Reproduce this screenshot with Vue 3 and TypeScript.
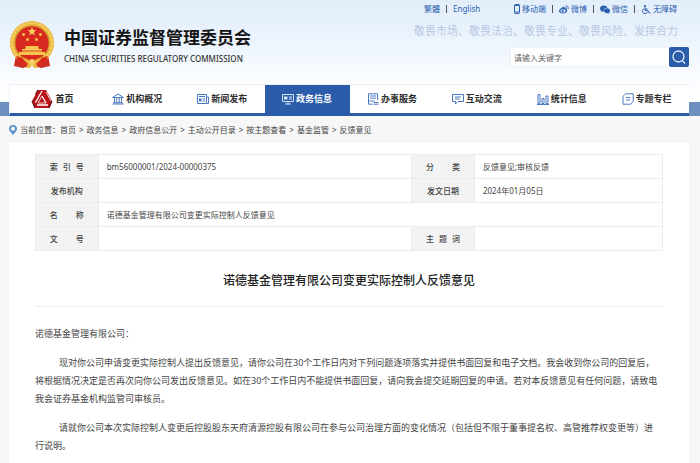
<script setup lang="ts">
import { ref } from 'vue'

interface NavItem { label: string; icon: string; active?: boolean }

const keyword = ref('')

const tools = [
  { label: '移动端', icon: 'phone' },
  { label: '微博', icon: 'weibo' },
  { label: '微信', icon: 'wechat' },
  { label: '无障碍', icon: 'access' },
]

const nav: NavItem[] = [
  { label: '首页', icon: 'home' },
  { label: '机构概况', icon: 'bank' },
  { label: '新闻发布', icon: 'news' },
  { label: '政务信息', icon: 'screen', active: true },
  { label: '办事服务', icon: 'service' },
  { label: '互动交流', icon: 'chat' },
  { label: '统计信息', icon: 'chart' },
  { label: '专题专栏', icon: 'topic' },
]

const crumbs = ['首页', '政务信息', '政府信息公开', '主动公开目录', '按主题查看', '基金监管', '反馈意见']

const title = '诺德基金管理有限公司变更实际控制人反馈意见'

const paragraphs: string[][] = [
  [
    '现对你公司申请变更实际控制人提出反馈意见，请你公司在30个工作日内对下列问题逐项落实并提供书面回复和电子文档。我会收到你公司的回复后，',
    '将根据情况决定是否再次向你公司发出反馈意见。如在30个工作日内不能提供书面回复，请向我会提交延期回复的申请。若对本反馈意见有任何问题，请致电',
    '我会证券基金机构监管司审核员。',
  ],
  [
    '请就你公司本次实际控制人变更后控股股东天府清源控股有限公司在参与公司治理方面的变化情况（包括但不限于董事提名权、高管推荐权变更等）进',
    '行说明。',
  ],
]
</script>

<template>
  <div class="page">
    <header class="header">
      <a class="brand" href="#">
        <svg class="emblem" viewBox="0 0 46 48" aria-hidden="true">
          <path d="M7 34 5 45l9 2 9-3 9 3 9-2-2-11z" fill="#cf2b22" />
          <circle cx="23" cy="22" r="22" fill="#e9b53c" />
          <circle cx="23" cy="22" r="20" fill="none" stroke="#f5d269" stroke-width="2" stroke-dasharray="3 1" />
          <circle cx="23" cy="22" r="17" fill="#d9281f" stroke="#c98a22" stroke-width="1" />
          <path d="m23 6 1.1 3.1h3.3l-2.6 2 1 3.200-2.800-1.900-2.800 1.900 1-3.200-2.600-2h3.300z" fill="#f8d45c" />
          <g fill="#f4c64e">
            <circle cx="14.500" cy="13.500" r="1.400" /><circle cx="31.500" cy="13.500" r="1.400" />
            <circle cx="18.500" cy="18.500" r="1.400" /><circle cx="27.500" cy="18.500" r="1.400" />
            <path d="M17 25h12l1 3h3v3h3v3H10v-3h3v-3h3z" />
          </g>
          <path d="M12 30h22" stroke="#d9281f" stroke-width="0.800" />
          <path d="M7 35q16 6 32 0l-3 6q-13 5-26 0z" fill="#d8281e" />
          <path d="M13 37q5 0 8 3l2-1 2 1q3-3 8-3l-6 6 2 4h-4l-2-3-2 3h-4l2-4z" fill="#eab93e" />
          <circle cx="23" cy="41" r="3" fill="#f5d269" />
        </svg>
        <span class="names">
          <span class="name-cn">中国证券监督管理委员会</span>
          <span class="name-en">CHINA SECURITIES REGULATORY COMMISSION</span>
        </span>
      </a>
      <div class="side">
        <div class="topline">
          <div class="links">
            <a href="#">繁體</a><i class="bar"></i><a href="#">English</a>
          </div>
          <div class="links">
            <template v-for="(t, i) in tools" :key="t.label">
              <i v-if="i" class="bar"></i>
              <a href="#" class="tool">
                <svg v-if="t.icon === 'phone'" class="phone" viewBox="0 0 6 10" aria-hidden="true">
                  <rect x="0.500" y="0.500" width="5" height="9" rx="0.800" fill="none" stroke="#2b5fae" />
                  <path d="M1 1.500h4M1 8h4" stroke="#2b5fae" />
                </svg>
                <svg v-else-if="t.icon === 'weibo'" viewBox="0 0 20 18" aria-hidden="true">
                  <path d="M8 4c2-1 4 0 3.500 2.500C14 6 16 7 15 9.200 18 10.500 16.500 17 8.500 17 3 17 0 14.500 0 12c0-3 4.500-7 8-8z" fill="#2b5fae" />
                  <ellipse cx="8" cy="12" rx="5.300" ry="3.500" fill="#e9f2fc" />
                  <circle cx="7.500" cy="12.300" r="2.200" fill="#2b5fae" />
                  <path d="M13 1.500c4-.8 6.500 2.500 5.300 6.500M13.300 4.500c2-.2 3 1 2.500 3" fill="none" stroke="#2b5fae" stroke-width="1.600" />
                </svg>
                <svg v-else-if="t.icon === 'wechat'" viewBox="0 0 20 18" aria-hidden="true">
                  <path d="M7.500 1C3.500 1 0 3.500 0 7c0 2 1 3.500 2.500 4.500L2 14l3-1.500c1 .3 2 .4 3 .3C6.500 8 11 5 15 5.300 14 2.500 11 1 7.500 1z" fill="#2b5fae" />
                  <path d="M14 6.500c-3.500 0-6 2.200-6 5s2.500 5 6 5l2-.3 2.500 1.300-.5-2c1.300-1 2-2.300 2-4 0-2.800-2.500-5-6-5z" fill="#2b5fae" />
                </svg>
                <svg v-else viewBox="0 0 18 18" aria-hidden="true">
                  <circle cx="7" cy="2.300" r="2.200" fill="#2b5fae" />
                  <path d="M7 5v6h6l2.500 5H18M7 8h5M5 8c-5 2-4 9 2 9 3 0 4.500-1.500 5-3.500" fill="none" stroke="#2b5fae" stroke-width="2" />
                </svg>
                {{ t.label }}
              </a>
            </template>
          </div>
        </div>
        <p class="slogan">敬畏市场、敬畏法治、敬畏专业、敬畏风险、发挥合力</p>
        <form class="search" @submit.prevent>
          <input v-model="keyword" type="text" placeholder="请输入关键字" aria-label="请输入关键字" />
          <button type="submit" aria-label="搜索">
            <svg viewBox="0 0 14 14" aria-hidden="true">
              <circle cx="6.500" cy="6.500" r="5.500" fill="none" stroke="#e4edfa" stroke-width="1.300" />
              <path d="m10.500 11 2.500 2.500" stroke="#e4edfa" stroke-width="1.300" />
            </svg>
          </button>
        </form>
      </div>
    </header>

    <div class="navband">
      <nav class="nav">
        <a v-for="n in nav" :key="n.label" href="#" :class="{ active: n.active }">
          <svg v-if="n.icon === 'home'" class="logo" viewBox="0 0 22 20" aria-hidden="true">
            <path d="M7 1h8l6 11-3 7H4l-3-7z" fill="#b8141c" />
            <path d="m11 2-6.500 11.500M11 7l4 7M6 16h11" fill="none" stroke="#fff" stroke-width="1.300" />
            <path d="m11 7-4 7h8M15 3l5 9" fill="none" stroke="#f3cccc" stroke-width="1" />
            <path d="M7 1 4.500 5.500M1 12l3 7M18 19l3-7" stroke="#651015" stroke-width="1.200" />
          </svg>
          <svg v-else class="icon" viewBox="0 0 12 12" fill="none" stroke="currentColor" aria-hidden="true">
            <g v-if="n.icon === 'bank'">
              <path d="M.5 4.500 6 1l5.500 3.500zM2.500 5v5M4.800 5v5M7.200 5v5M9.500 5v5M.5 11h11M1 9.800h10" />
            </g>
            <g v-else-if="n.icon === 'news'">
              <path d="M.5 1.500h9v9h-9zM9.500 4h2v6.500h-2M2 3.500h6M5.500 6H8M5.500 8H8" />
              <path d="M2 5.500h2.500v3H2z" fill="currentColor" stroke="none" />
            </g>
            <g v-else-if="n.icon === 'screen'">
              <path d="M.5 1.500h11v7H.5zM3 11h6M6 8.500V11M7 4h3M7 6h3" />
              <path d="M2 3.500h3.500v3H2z" fill="currentColor" stroke="none" />
            </g>
            <g v-else-if="n.icon === 'service'">
              <path d="M10.500 7V.8h-9v10.400h4M3 3h6M3 5.200h6M1.500 8h6M6.500 9.500h5M6.500 11.200h5" />
            </g>
            <g v-else-if="n.icon === 'chat'">
              <path d="M.5 1.500h11v7H6l-2.500 2.500V8.500h-3zM3 4h6M3 6h4.500" />
            </g>
            <g v-else-if="n.icon === 'chart'">
              <path d="M1 1.500h2v9H1zM5 5.500h2v5H5zM9 3h2v7.500H9zM0 11.500h12" />
            </g>
            <g v-else>
              <path d="M3.500.8h7.700v7.700l-2.500 2.700H1V3.300zM4 4.500h4.500M4 7h4.500" />
            </g>
          </svg>
          <span>{{ n.label }}</span>
        </a>
      </nav>
    </div>

    <div class="crumbs">
      <svg viewBox="0 0 8 10" aria-hidden="true">
        <path d="M4 0a4 4 0 0 1 4 4c0 2-2 3.500-4 6C2 7.500 0 6 0 4a4 4 0 0 1 4-4z" fill="#5f92c9" />
        <circle cx="4" cy="3.800" r="2" fill="#f7f7f7" />
      </svg>
      <span>当前位置：</span>
      <template v-for="(c, i) in crumbs" :key="c">
        <span v-if="i" class="sep">&gt;</span>
        <a href="#">{{ c }}</a>
      </template>
    </div>

    <main class="panel">
      <table class="meta">
        <colgroup><col class="c-label" /><col class="c-wide" /><col class="c-label" /><col class="c-value" /></colgroup>
        <tbody>
          <tr>
            <th scope="row"><span class="spread"><b>索</b><b>引</b><b>号</b></span></th>
            <td>bm56000001/2024-00000375</td>
            <th scope="row"><span class="spread"><b>分</b><b>类</b></span></th>
            <td>反馈意见;审核反馈</td>
          </tr>
          <tr>
            <th scope="row">发布机构</th>
            <td></td>
            <th scope="row">发文日期</th>
            <td>2024年01月05日</td>
          </tr>
          <tr>
            <th scope="row"><span class="spread"><b>名</b><b>称</b></span></th>
            <td colspan="3">{{ title }}</td>
          </tr>
          <tr>
            <th scope="row"><span class="spread"><b>文</b><b>号</b></span></th>
            <td></td>
            <th scope="row"><span class="spread"><b>主</b><b>题</b><b>词</b></span></th>
            <td></td>
          </tr>
        </tbody>
      </table>

      <h1>{{ title }}</h1>

      <article class="article">
        <p>诺德基金管理有限公司：</p>
        <p v-for="(p, i) in paragraphs" :key="i" class="indent">
          <template v-for="(line, j) in p" :key="j"><br v-if="j" />{{ line }}</template>
        </p>
      </article>
    </main>
  </div>
</template>

<style>
body {
  background: #f7f7f7;
}
</style>

<style scoped>
.page {
  font-family: "Noto Sans", "Noto Sans CJK SC", sans-serif;
  font-size: 8px;
  line-height: 12px;
  color: #444;
  background: #f7f7f7;
}
a {
  color: inherit;
  text-decoration: none;
}
.header {
  display: flex;
  justify-content: space-between;
  align-items: flex-start;
  box-sizing: border-box;
  min-height: 84px;
  padding: 0 11px 0 9px;
  background: linear-gradient(#e3eefb 0, #e7f1fc 30%, #fbfdff 100%);
}
.brand {
  display: flex;
  align-items: center;
  gap: 9px;
  padding-top: 21px;
}
.emblem {
  width: 46px;
  height: 48px;
}
.names {
  display: flex;
  flex-direction: column;
  gap: 3px;
  white-space: nowrap;
  color: #151515;
}
.name-cn {
  font-size: 17px;
  line-height: 24px;
  font-weight: 700;
}
.name-en {
  font-size: 8px;
  line-height: 12px;
  font-weight: 500;
  color: #333;
}
.side {
  display: flex;
  flex-direction: column;
  align-items: flex-end;
}
.topline {
  display: flex;
  justify-content: space-between;
  align-self: stretch;
  padding: 3px 12px 0 10px;
  color: #2b5fae;
}
.links {
  display: flex;
  align-items: center;
  gap: 6px;
}
.bar {
  width: 1px;
  height: 8px;
  background: #555;
}
.tool {
  display: flex;
  align-items: center;
  gap: 2px;
}
.tool svg {
  width: 10px;
  height: 9px;
}
.tool .phone {
  width: 6px;
  height: 10px;
}
.slogan {
  margin: 6px 11px 0 0;
  font-family: "KaiTi", "STKaiti", "Noto Sans CJK SC", sans-serif;
  font-size: 11px;
  line-height: 18px;
  font-weight: 300;
  color: #a3b4d8;
  white-space: nowrap;
}
.search {
  display: flex;
  margin-top: 8px;
}
.search input {
  box-sizing: border-box;
  width: 159px;
  height: 20px;
  padding: 0 3px;
  border: 1px solid #edf0f4;
  border-right: 0;
  border-radius: 2px 0 0 2px;
  background: #fff;
  font: inherit;
  color: #555;
}
.search input::placeholder {
  color: #666;
  opacity: 1;
}
.search button {
  display: grid;
  place-items: center;
  width: 20px;
  height: 20px;
  padding: 0;
  border: 0;
  border-radius: 2px;
  background: #2a5caa;
}
.search svg {
  width: 14px;
  height: 14px;
}
.navband {
  padding: 0 11px 0 9px;
  background: linear-gradient(#fbfdff 0 18px, #6e90c1 18px);
}
.nav {
  display: grid;
  grid-template-columns: repeat(8, 1fr);
  background: #fff;
  border: 1px solid #eef1f5;
  border-width: 1px 0 0 1px;
  border-bottom: 3px solid #2a5caa;
}
.nav a {
  display: flex;
  align-items: center;
  justify-content: center;
  gap: 2px;
  height: 28px;
  font-size: 9px;
  font-weight: 700;
  color: #2d2d2d;
  white-space: nowrap;
}
.nav .active {
  background: #2a5caa;
  color: #fff;
}
.icon {
  width: 12px;
  height: 12px;
  color: #4a7ac4;
}
.active .icon {
  color: #d5e3f7;
}
.logo {
  width: 22px;
  height: 20px;
}
.crumbs {
  display: flex;
  align-items: center;
  height: 27px;
  padding-left: 9px;
  white-space: nowrap;
}
.crumbs svg {
  width: 8px;
  height: 10px;
  margin-right: 3px;
}
.crumbs .sep {
  margin: 0 3px;
}
.panel {
  margin: 0 11px 0 9px;
  padding: 11px 26px 20px;
  background: #fff;
}
.meta {
  width: 100%;
  table-layout: fixed;
  border-collapse: collapse;
}
.c-label {
  width: 10%;
}
.c-wide {
  width: 50%;
}
.c-value {
  width: 30%;
}
.meta th,
.meta td {
  height: 23px;
  padding: 0 8px;
  border: 1px solid #e9ecee;
  text-align: left;
}
.meta th {
  padding: 0;
  background: #f3f3f3;
  text-align: center;
  font-weight: 500;
}
.spread {
  display: flex;
  justify-content: space-between;
  width: 34px;
  margin: 0 auto;
}
.spread b {
  font-weight: 500;
}
h1 {
  margin: 0;
  padding: 20px 0 15px;
  border-bottom: 1px solid #eee;
  font-size: 12px;
  line-height: 20px;
  font-weight: 500;
  text-align: center;
  color: #222;
}
.article {
  padding-top: 18px;
  font-size: 9px;
  line-height: 18px;
  white-space: nowrap;
}
.article p {
  margin: 0 0 11px;
}
.article .indent {
  text-indent: 24px;
}
</style>
